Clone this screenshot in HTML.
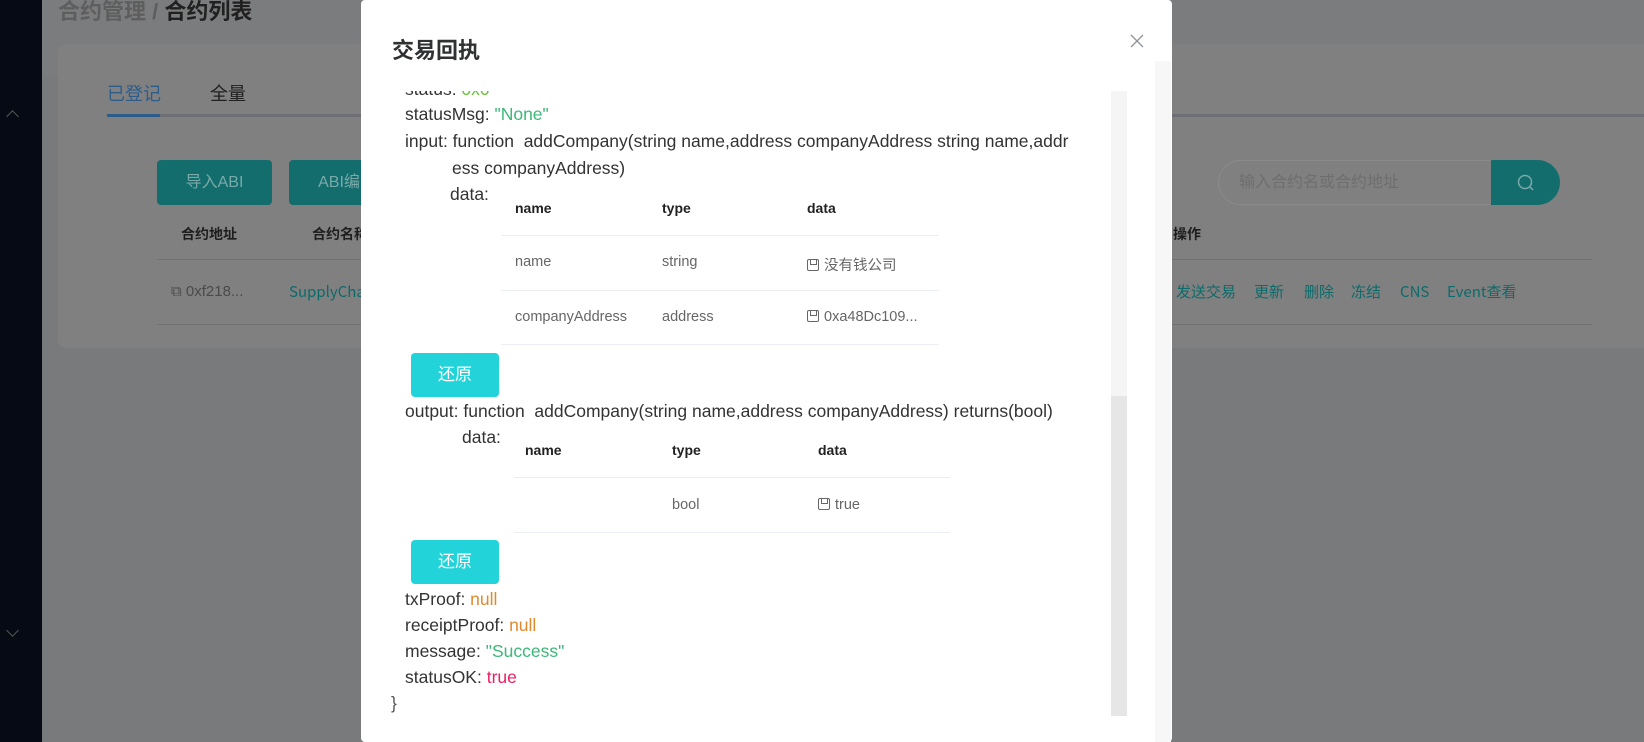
<!DOCTYPE html>
<html><head><meta charset="utf-8"><style>
*{margin:0;padding:0;box-sizing:border-box}
body{width:1644px;height:742px;overflow:hidden;position:relative;background:#787a7c;font-family:"Liberation Sans","Noto Sans CJK SC",sans-serif}
.a{position:absolute;white-space:nowrap}
.sb{left:0;top:0;width:42px;height:742px;background:#050a14}
.card{left:58px;top:44px;width:1600px;height:304px;background:#808080;border-radius:8px}
.btn{background:#136d6d;color:#7aa9a9;border-radius:4px;font-size:16px;text-align:center;line-height:45px}
.lk{color:#0d6a6a;font-size:15px;font-family:"Noto Sans CJK SC",sans-serif;line-height:20px}
.th{color:#1e1e1e;font-size:14px;font-weight:bold}
.modal{left:361px;top:0;width:811px;height:742px;background:#fff;border-radius:4px}
.t{font-size:17.5px;color:#333}
.g{color:#3cb878}.o{color:#e08a30}.p{color:#ea1e63}
.tb{font-size:14.5px;color:#666}
.tbh{font-size:14px;color:#222;font-weight:bold}
.ln{height:1px;background:#ebeef5}
.rb{background:#22d4da;color:#fff;border-radius:4px;font-size:17px;text-align:center;line-height:44px;width:88px;height:44px}
.ic{display:inline-block;width:12px;height:12px;border:1.5px solid #666;border-radius:2px;position:relative;margin-right:5px;vertical-align:-1px}
.ic:after{content:"";position:absolute;left:2px;top:0;width:5px;height:4px;border:1.5px solid #666;border-top:none}
</style></head><body>
<div class="a sb"></div>
<div class="a" style="left:8px;top:112px;width:9px;height:9px;border-left:1px solid #555;border-top:1px solid #555;transform:rotate(45deg)"></div>
<div class="a" style="left:8px;top:626px;width:9px;height:9px;border-right:1px solid #555;border-bottom:1px solid #555;transform:rotate(45deg)"></div>
<div class="a" style="left:42px;top:0;width:1602px;height:76px;background:#7b7c7d"></div>
<div class="a" style="left:58px;top:-6px;font-size:22px;font-weight:bold;color:#5e5e5e">合约管理 / <span style="color:#202020">合约列表</span></div>
<div class="a card"></div>
<div class="a" style="left:107px;top:80px;font-size:18px;color:#2e5c8a">已登记</div>
<div class="a" style="left:210px;top:80px;font-size:18px;color:#202020">全量</div>
<div class="a" style="left:107px;top:114px;width:1537px;height:3px;background:#6e6f74"></div>
<div class="a" style="left:107px;top:114px;width:53px;height:3px;background:#2e5c8a"></div>
<div class="a btn" style="left:157px;top:160px;width:115px;height:45px">导入ABI</div>
<div class="a btn" style="left:289px;top:160px;width:100px;height:45px">ABI编</div>
<div class="a" style="left:1218px;top:160px;width:300px;height:45px;border:1px solid #8a8a8a;border-radius:23px 0 0 23px;color:#6e6e6e;font-size:16px;line-height:43px;padding-left:20px">输入合约名或合约地址</div>
<div class="a" style="left:1491px;top:160px;width:69px;height:45px;background:#136d6d;border-radius:0 23px 23px 0"></div>
<svg class="a" style="left:1516px;top:173px" width="20" height="20" viewBox="0 0 20 20"><circle cx="9" cy="9" r="6.5" fill="none" stroke="#7aa9a9" stroke-width="1.5"/><path d="M14 14l3 3" stroke="#7aa9a9" stroke-width="1.5"/></svg>
<div class="a th" style="left:181px;top:224px">合约地址</div>
<div class="a th" style="left:312px;top:224px">合约名称</div>
<div class="a th" style="left:1173px;top:224px">操作</div>
<div class="a" style="left:157px;top:259px;width:1435px;height:1px;background:#727272"></div>
<div class="a" style="left:157px;top:324px;width:1435px;height:1px;background:#727272"></div>
<div class="a" style="left:171px;top:283px;font-size:15px;color:#4a4a4a">⧉ 0xf218...</div>
<div class="a lk" style="left:289px;top:282px">SupplyCha</div>
<div class="a lk" style="left:1176px;top:282px">发送交易</div>
<div class="a lk" style="left:1254px;top:282px">更新</div>
<div class="a lk" style="left:1304px;top:282px">删除</div>
<div class="a lk" style="left:1351px;top:282px">冻结</div>
<div class="a lk" style="left:1400px;top:282px">CNS</div>
<div class="a lk" style="left:1447px;top:282px">Event查看</div>

<div class="a modal"></div>
<div class="a" style="left:1155px;top:61px;width:16px;height:681px;background:#f7f7f7"></div>
<div class="a" style="left:392px;top:33px;font-size:22px;font-weight:bold;color:#303133">交易回执</div>
<svg class="a" style="left:1130px;top:34px" width="14" height="14" viewBox="0 0 14 14"><path d="M1 1L13 13M13 1L1 13" stroke="#909399" stroke-width="1.3"/></svg>
<div class="a" style="left:1111px;top:91px;width:16px;height:625px;background:#f5f5f5"></div>
<div class="a" style="left:1111px;top:396px;width:16px;height:320px;background:#e6e6e6"></div>
<div class="a" style="left:380px;top:91px;width:720px;height:30px;overflow:hidden"><div class="a t" style="left:25px;top:-12px">status: <span style="color:#67c23a">0x0</span></div></div>
<div class="a t" style="left:405px;top:104px">statusMsg: <span class="g">"None"</span></div>
<div class="a t" style="left:405px;top:131px">input: function&nbsp; addCompany(string name,address companyAddress string name,addr</div>
<div class="a t" style="left:452px;top:158px">ess companyAddress)</div>
<div class="a t" style="left:450px;top:184px">data:</div>
<div class="a tbh" style="left:515px;top:200px">name</div>
<div class="a tbh" style="left:662px;top:200px">type</div>
<div class="a tbh" style="left:807px;top:200px">data</div>
<div class="a ln" style="left:501px;top:235px;width:438px"></div>
<div class="a tb" style="left:515px;top:254px">name</div>
<div class="a tb" style="left:662px;top:254px">string</div>
<div class="a tb" style="left:807px;top:254px"><span class="ic"></span>没有钱公司</div>
<div class="a ln" style="left:501px;top:290px;width:438px"></div>
<div class="a tb" style="left:515px;top:309px">companyAddress</div>
<div class="a tb" style="left:662px;top:309px">address</div>
<div class="a tb" style="left:807px;top:309px"><span class="ic"></span>0xa48Dc109...</div>
<div class="a ln" style="left:501px;top:344px;width:438px"></div>
<div class="a rb" style="left:411px;top:353px">还原</div>
<div class="a t" style="left:405px;top:401px">output: function&nbsp; addCompany(string name,address companyAddress) returns(bool)</div>
<div class="a t" style="left:462px;top:427px">data:</div>
<div class="a tbh" style="left:525px;top:442px">name</div>
<div class="a tbh" style="left:672px;top:442px">type</div>
<div class="a tbh" style="left:818px;top:442px">data</div>
<div class="a ln" style="left:514px;top:477px;width:436px"></div>
<div class="a tb" style="left:672px;top:497px">bool</div>
<div class="a tb" style="left:818px;top:497px"><span class="ic"></span>true</div>
<div class="a ln" style="left:514px;top:532px;width:436px"></div>
<div class="a rb" style="left:411px;top:540px">还原</div>
<div class="a t" style="left:405px;top:589px">txProof: <span class="o">null</span></div>
<div class="a t" style="left:405px;top:615px">receiptProof: <span class="o">null</span></div>
<div class="a t" style="left:405px;top:641px">message: <span class="g">"Success"</span></div>
<div class="a t" style="left:405px;top:667px">statusOK: <span class="p">true</span></div>
<div class="a t" style="left:391px;top:693px;color:#555">}</div>
</body></html>
